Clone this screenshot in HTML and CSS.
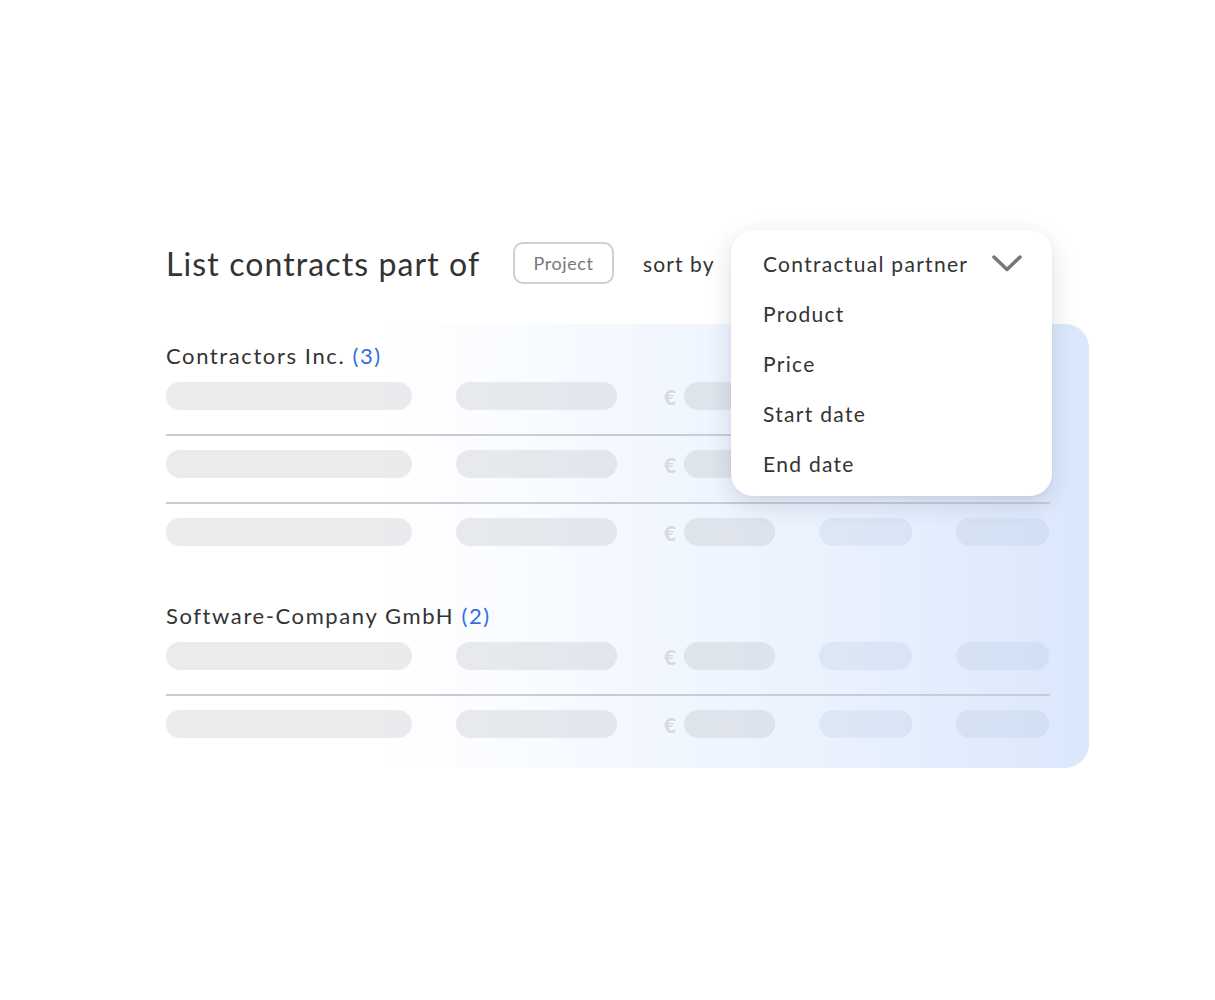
FILE: index.html
```html
<!DOCTYPE html>
<html lang="en">
<head>
  <meta charset="UTF-8">
  <title>Contracts | Sort</title>
  <meta name="viewport" content="width=device-width, initial-scale=1.0" />
  <link rel="stylesheet" href="styles.css">
</head>
<body>
  <div class="scene">
    <div class="toolbar">
      <h1 class="title">List contracts part of</h1>
      <span class="pill">Project</span>
      <span class="sort-label">sort by</span>
      <div class="sort">
        <ul class="sort-menu">
          <li class="sort-current">
            Contractual partner
            <svg class="chevron" width="30" height="17" viewBox="0 0 30 17">
              <path d="M2 2 L15 14.5 L28 2" fill="none" stroke="#777" stroke-width="3.5" stroke-linecap="round" stroke-linejoin="round"/>
            </svg>
          </li>
          <li>Product</li>
          <li>Price</li>
          <li>Start date</li>
          <li>End date</li>
        </ul>
      </div>
    </div>

    <div class="panel">
      <div class="group">
        <h3 class="group-name">Contractors Inc. <span class="count">(3)</span></h3>
        <div class="row">
          <span class="bar w-name"></span><span class="bar w-product"></span>
          <span class="euro">€</span><span class="bar w-price"></span>
          <span class="bar w-date"></span><span class="bar w-date"></span>
        </div>
        <div class="row">
          <span class="bar w-name"></span><span class="bar w-product"></span>
          <span class="euro">€</span><span class="bar w-price"></span>
          <span class="bar w-date"></span><span class="bar w-date"></span>
        </div>
        <div class="row">
          <span class="bar w-name"></span><span class="bar w-product"></span>
          <span class="euro">€</span><span class="bar w-price"></span>
          <span class="bar w-date"></span><span class="bar w-date"></span>
        </div>
      </div>

      <div class="group">
        <h3 class="group-name">Software-Company GmbH <span class="count">(2)</span></h3>
        <div class="row">
          <span class="bar w-name"></span><span class="bar w-product"></span>
          <span class="euro">€</span><span class="bar w-price"></span>
          <span class="bar w-date"></span><span class="bar w-date"></span>
        </div>
        <div class="row">
          <span class="bar w-name"></span><span class="bar w-product"></span>
          <span class="euro">€</span><span class="bar w-price"></span>
          <span class="bar w-date"></span><span class="bar w-date"></span>
        </div>
      </div>
    </div>
  </div>
</body>
</html>
```

FILE: styles.css
```css
body {
  font-family: Lato, 'Noto Sans', sans-serif;
  background-color: #fff;
  margin: 0;
  color: #333;
}

.scene {
  width: 949px;
  margin: 230px 0 0 140px;
}

.toolbar {
  display: flex;
  align-items: center;
  height: 66px;
  padding-left: 26px;
  position: relative;
  z-index: 2;
}

.title {
  width: 347px;
  margin: 0;
  font-size: 32px;
  font-weight: 400;
  letter-spacing: 1.1px;
  color: #333;
}

.pill {
  box-sizing: border-box;
  width: 101px;
  height: 42px;
  border: 2px solid #cfcfcf;
  border-radius: 10px;
  display: flex;
  align-items: center;
  justify-content: center;
  font-size: 18px;
  letter-spacing: 0.6px;
  color: #777;
}

.sort-label {
  width: 88px;
  margin-left: 29px;
  font-size: 21px;
  letter-spacing: 1.1px;
  color: #333;
}

.sort {
  position: relative;
  width: 321px;
  height: 66px;
  align-self: flex-start;
}

.sort-menu {
  position: absolute;
  top: 0;
  left: 0;
  width: 321px;
  box-sizing: border-box;
  margin: 0;
  padding: 8px 30px 8px 32px;
  list-style: none;
  background: #fff;
  border-radius: 22px;
  box-shadow: 0 8px 26px rgba(30, 40, 70, 0.14), 0 1px 4px rgba(0, 0, 0, 0.04);
}

.sort-menu li {
  height: 50px;
  display: flex;
  align-items: center;
  font-size: 21px;
  letter-spacing: 1.3px;
  color: #333;
}

.sort-current {
  justify-content: space-between;
}

.chevron {
  display: block;
}

.panel {
  margin-top: 28px;
  height: 444px;
  box-sizing: border-box;
  padding: 18px 39px 0 26px;
  border-radius: 0 24px 24px 0;
  background: linear-gradient(90deg, #fff 0%, #fff 26%, #f3f8ff 52%, #e9f1fe 75%, #dbe7fc 100%);
}

.group + .group {
  margin-top: 56px;
}

.group-name {
  margin: 0 0 12px;
  height: 28px;
  line-height: 28px;
  font-size: 22px;
  font-weight: 400;
  letter-spacing: 1.6px;
  color: #333;
}

.count {
  color: #2f6fde;
}

.row {
  display: flex;
  align-items: center;
  height: 28px;
}

.row + .row {
  margin-top: 40px;
  position: relative;
}

.row + .row::before {
  content: "";
  position: absolute;
  left: 0;
  right: 0;
  top: -16px;
  height: 2px;
  background: linear-gradient(90deg, #cbcbcb 0%, #c8ccd3 60%, #c7cdd8 100%);
}

.bar {
  height: 28px;
  border-radius: 14px;
  background: rgba(185, 188, 196, 0.3);
}

.w-name {
  width: 246px;
}

.w-product {
  width: 161px;
  margin-left: 44px;
}

.euro {
  margin-left: 47px;
  width: 20px;
  font-size: 21px;
  font-weight: 700;
  color: #d6d9df;
}

.w-price {
  width: 91px;
}

.w-date {
  width: 93px;
  margin-left: 44px;
  background: rgba(175, 190, 215, 0.22);
}
```
